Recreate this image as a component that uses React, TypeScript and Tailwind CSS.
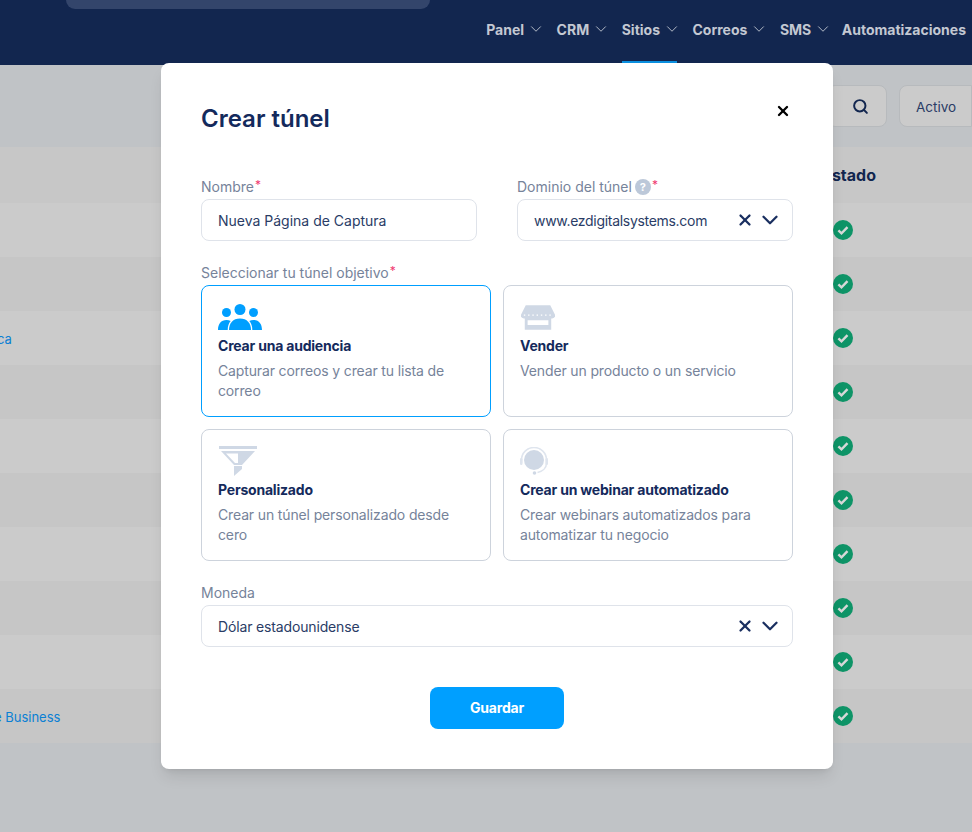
import { ChevronDown, Search, X } from "lucide-react";

const navItems = ["Panel", "CRM", "Sitios", "Correos", "SMS"];
const rows = [
  { text: "", offset: "" },
  { text: "", offset: "" },
  { text: "ca", offset: "-ml-[3px]" },
  { text: "", offset: "" },
  { text: "", offset: "" },
  { text: "", offset: "" },
  { text: "", offset: "" },
  { text: "", offset: "" },
  { text: "", offset: "" },
  { text: "e Business", offset: "-ml-[6px]" },
];

function CheckBadge() {
  return (
    <svg viewBox="0 0 20 20" className="h-5 w-5">
      <circle cx="10" cy="10" r="10" fill="#0e9467" />
      <path d="M5.4 10.4l3.1 3 6-6.2" fill="none" stroke="#d8d8d8" strokeWidth="2.4" />
    </svg>
  );
}

function AudienceIcon() {
  return (
    <svg viewBox="0 0 44 26" className="h-[26px] w-[44px]" fill="#009fff">
      <circle cx="22" cy="5.5" r="5.5" />
      <circle cx="8.5" cy="8.5" r="4.5" />
      <circle cx="35.5" cy="8.5" r="4.5" />
      <path d="M11 26c0-7 4-11.5 11-11.5S33 19 33 26z" />
      <path d="M0 26c0-6 3-10 8.5-10 1.6 0 3 .3 4.2 1-2 2.2-3 5.2-3 9z" />
      <path d="M44 26c0-6-3-10-8.5-10-1.6 0-3 .3-4.2 1 2 2.2 3 5.2 3 9z" />
    </svg>
  );
}

function ShopIcon() {
  return (
    <svg viewBox="0 0 36 27" className="ml-[1px] h-[26px] w-[34px]" fill="#cfd8e5">
      <path d="M5 1h26l5 10a3.5 3.5 0 0 1-3 4H3a3.5 3.5 0 0 1-3-4z" />
      <path fillRule="evenodd" d="M4 14h28v13H4zM7 17v5h22v-5z" />
      <path d="M3 11.5h30" stroke="#fff" strokeWidth="1.4" strokeDasharray="1.5 3" />
    </svg>
  );
}

function FunnelIcon() {
  return (
    <svg viewBox="0 0 38 30" className="-mb-[2px] ml-[1px] h-[30px] w-[38px]" fill="#cfd8e5">
      <path d="M0 0h38v3H0z" />
      <path fillRule="evenodd" d="M2 5h34L23 19h-8zM7 7.5l9 9.5h3V7.5z" />
      <path d="M15 20h8v3l-8 7z" />
    </svg>
  );
}

function WebinarIcon() {
  return (
    <svg viewBox="0 0 28 28" className="-mb-[1px] h-[28px] w-[28px]">
      <circle cx="14" cy="13" r="10" fill="#cfd8e5" />
      <path d="M1.5 16V13a12.5 12.5 0 0 1 25 0v3c0 5-4 8.5-9 9.5" fill="none" stroke="#dfe5ee" strokeWidth="1.6" />
      <circle cx="14.5" cy="26" r="1.8" fill="#cfd8e5" />
      <rect x="0" y="11" width="2.5" height="7" rx="1.2" fill="#dfe5ee" />
      <rect x="25.5" y="11" width="2.5" height="7" rx="1.2" fill="#dfe5ee" />
    </svg>
  );
}

function FieldLabel({ text, help, required = true }: { text: string; help?: boolean; required?: boolean }) {
  return (
    <div className="mb-[4px] flex h-[16px] items-center text-sm leading-4 text-[#76839a]">
      {text}
      {help && (
        <span className="ml-[3px] flex h-4 w-4 items-center justify-center rounded-full bg-[#bcc8d9] text-[11px] font-bold text-white">?</span>
      )}
      {required && <span className="self-start pl-[1px] text-xs leading-3 text-[#f0386f]">*</span>}
    </div>
  );
}

function SelectField({ value, tracking }: { value: string; tracking: string }) {
  return (
    <div className="flex h-[42px] items-center justify-between rounded-lg border border-[#dfe3ea] pr-[9px] pl-4 text-sm text-[#2a3c66]">
      <span className={`pt-[2px] ${tracking}`}>{value}</span>
      <div className="flex items-center gap-[3px] text-[#1a2f60]">
        <X className="h-[18px] w-[18px]" strokeWidth={3} />
        <ChevronDown className="h-[26px] w-[26px]" strokeWidth={2.1} />
      </div>
    </div>
  );
}

function GoalCard({
  icon,
  title,
  text,
  active,
}: {
  icon: React.ReactNode;
  title: string;
  text: string;
  active?: boolean;
}) {
  return (
    <div className={`h-[132px] rounded-lg border px-4 pt-[14px] ${active ? "border-[#009fff]" : "border-[#cdd3dc]"}`}>
      <div className="flex h-[30px] items-end">{icon}</div>
      <h3 className="mt-[6px] text-sm leading-5 font-bold tracking-[-0.2px] text-[#142a5c]">{title}</h3>
      <p className="mt-[5px] text-sm leading-5 tracking-[-0.14px] text-[#76839a]">{text}</p>
    </div>
  );
}

export default function App() {
  return (
    <div className="relative h-[832px] w-[972px] overflow-hidden bg-[#c0c3c6] font-['Inter',sans-serif]">
      <header className="h-[65px] bg-[#12264f]">
        <div className="ml-[66px] h-[9px] w-[364px] rounded-b-[20px] bg-[#33456b]" />
        <nav className="flex h-[56px] justify-end gap-[15.5px] pr-[6px] text-sm font-bold whitespace-nowrap text-[#c3c8d2]">
          {navItems.map((item) => (
            <div
              key={item}
              className={`flex h-[55px] items-start gap-[3px] border-b-[3px] pt-[11px] ${item === "Sitios" ? "border-[#0a8fdf]" : "border-transparent"}`}
            >
              {item}
              <ChevronDown className="-mr-[4px] h-[18px] w-[18px]" strokeWidth={1.2} />
            </div>
          ))}
          <div className="-ml-[2px] pt-[11px]">Automatizaciones</div>
        </nav>
      </header>

      <div className="flex h-[82px] justify-end gap-[12px] pt-[20px]">
        <div className="flex h-[42px] w-[60px] items-center justify-end rounded-lg border border-[#b7babd] bg-[#cbcbcb] pr-[17px] text-[#12264f]">
          <Search className="h-[17px] w-[17px]" strokeWidth={2.8} />
        </div>
        <div className="h-[42px] w-[73px] rounded-l-lg border border-[#b7babd] bg-[#cbcbcb] pl-4 text-[13.5px] leading-[42px] text-[#2a3c66]">Activo</div>
      </div>

      <div className="flex h-[56px] items-center justify-end bg-[#c7c7c7] pr-[96px] text-base font-bold text-[#12264f]">Estado</div>
      {rows.map((row, i) => (
        <div
          key={i}
          className={`flex h-[54px] items-center justify-between pr-[119px] text-[13px] text-[#0a80d4] ${i % 2 === 0 ? "bg-[#cbcbcb]" : "bg-[#c6c6c6]"}`}
        >
          <span className={`pt-[4px] ${row.offset}`}>{row.text}</span>
          <CheckBadge />
        </div>
      ))}

      <div className="absolute top-[63px] left-[161px] h-[706px] w-[672px] rounded-lg bg-white px-10 pt-[41px] shadow-lg">
        <div className="flex h-[30px] items-center justify-between">
          <h2 className="text-2xl font-semibold text-[#142a5c]">Crear túnel</h2>
          <X className="mr-[2px] -mt-[16px] h-[16px] w-[16px] text-black" strokeWidth={3.5} />
        </div>

        <div className="mt-[45px] grid grid-cols-2 gap-10">
          <div>
            <FieldLabel text="Nombre" />
            <div className="flex h-[42px] items-center rounded-lg border border-[#dfe3ea] pt-[2px] pl-4 text-sm text-[#2a3c66]">Nueva Página de Captura</div>
          </div>
          <div>
            <FieldLabel text="Dominio del túnel" help />
            <SelectField value="www.ezdigitalsystems.com" tracking="tracking-[-0.3px]" />
          </div>
        </div>

        <div className="mt-[24px]">
          <FieldLabel text="Seleccionar tu túnel objetivo" />
          <div className="grid grid-cols-2 gap-3">
            <GoalCard active icon={<AudienceIcon />} title="Crear una audiencia" text="Capturar correos y crear tu lista de correo" />
            <GoalCard icon={<ShopIcon />} title="Vender" text="Vender un producto o un servicio" />
            <GoalCard icon={<FunnelIcon />} title="Personalizado" text="Crear un túnel personalizado desde cero" />
            <GoalCard icon={<WebinarIcon />} title="Crear un webinar automatizado" text="Crear webinars automatizados para automatizar tu negocio" />
          </div>
        </div>

        <div className="mt-[24px]">
          <FieldLabel text="Moneda" required={false} />
          <SelectField value="Dólar estadounidense" tracking="tracking-[-0.15px]" />
        </div>

        <div className="mt-10 flex justify-center">
          <button className="h-[42px] w-[134px] rounded-lg bg-[#009fff] text-sm font-bold tracking-[-0.2px] text-white">Guardar</button>
        </div>
      </div>
    </div>
  );
}
